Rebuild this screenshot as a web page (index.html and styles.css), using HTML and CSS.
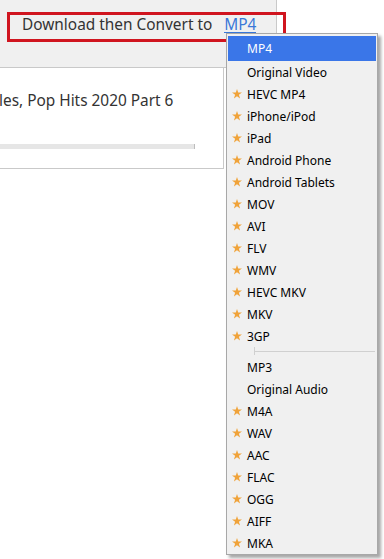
FILE: index.html
```html
<!DOCTYPE html>
<html>
<head>
<meta charset="utf-8">
<link rel="stylesheet" href="styles.css">
</head>
<body>
<div class="page">
  <div class="toolbar">
    <div class="convert">
      <span class="convert-label">Download then Convert to</span>
      <a class="convert-link" href="#">MP4</a>
    </div>
  </div>
  <div class="item-card">
    <div class="item-title">les, Pop Hits 2020 Part 6</div>
    <div class="progress"></div>
  </div>
  <div class="annotation"></div>
  <ul class="menu">
    <li class="menu-item active">MP4</li>
    <li class="menu-item">Original Video</li>
    <li class="menu-item star">HEVC MP4</li>
    <li class="menu-item star">iPhone/iPod</li>
    <li class="menu-item star">iPad</li>
    <li class="menu-item star">Android Phone</li>
    <li class="menu-item star">Android Tablets</li>
    <li class="menu-item star">MOV</li>
    <li class="menu-item star">AVI</li>
    <li class="menu-item star">FLV</li>
    <li class="menu-item star">WMV</li>
    <li class="menu-item star">HEVC MKV</li>
    <li class="menu-item star">MKV</li>
    <li class="menu-item star">3GP</li>
    <li class="menu-sep"></li>
    <li class="menu-item">MP3</li>
    <li class="menu-item">Original Audio</li>
    <li class="menu-item star">M4A</li>
    <li class="menu-item star">WAV</li>
    <li class="menu-item star">AAC</li>
    <li class="menu-item star">FLAC</li>
    <li class="menu-item star">OGG</li>
    <li class="menu-item star">AIFF</li>
    <li class="menu-item star">MKA</li>
  </ul>
</div>
</body>
</html>
```
FILE: styles.css
```css
html, body {
  margin: 0;
  padding: 0;
  background: #ffffff;
}
body {
  width: 384px;
  height: 559px;
  overflow: hidden;
  font-family: "Noto Sans", "Open Sans", sans-serif;
}
.page {
  position: relative;
  width: 384px;
  height: 559px;
}
.toolbar {
  width: 277px;
  height: 68px;
  background: #f0f0f0;
  border-right: 1px solid #c9c9c9;
  border-bottom: 1px solid #c9c9c9;
  box-sizing: border-box;
  padding: 12px 0 0 22px;
}
.convert {
  display: flex;
  align-items: baseline;
  gap: 12px;
  font-size: 15.4px;
  line-height: 25px;
  color: #333333;
  white-space: nowrap;
}
.convert-link {
  color: #3a78d8;
  text-decoration: none;
  line-height: 15px;
  border-bottom: 1px solid #3a78d8;
}
.item-card {
  width: 224px;
  height: 101px;
  border-right: 1px solid #c9c9c9;
  border-bottom: 1px solid #c9c9c9;
  box-sizing: border-box;
  padding-top: 21px;
}
.item-title {
  font-size: 15.4px;
  line-height: 24px;
  color: #333333;
  white-space: nowrap;
  margin-left: -1px;
}
.progress {
  margin-top: 31px;
  width: 195px;
  height: 5px;
  background: #e6e6e6;
  border-right: 1px solid #bdbdbd;
  box-sizing: border-box;
}
.annotation {
  position: absolute;
  left: 7px;
  top: 12px;
  width: 279px;
  height: 30px;
  border: 3px solid #d0151f;
  box-sizing: border-box;
}
.menu {
  position: absolute;
  left: 226px;
  top: 33px;
  width: 152px;
  margin: 0;
  padding: 2px 1px 0 1px;
  list-style: none;
  background: #f0f0f0;
  border: 1px solid #a8a8a8;
  box-shadow: 3px 3px 3px rgba(0, 0, 0, 0.35);
  box-sizing: border-box;
  font-size: 12px;
  color: #000000;
}
.menu-item {
  position: relative;
  height: 22px;
  line-height: 22px;
  padding-left: 19px;
  padding-top: 1px;
  box-sizing: border-box;
  white-space: nowrap;
}
.menu-item.active {
  height: 25px;
  line-height: 24px;
  background: #3a76e8;
  color: #ffffff;
}
.menu-item.star::before {
  content: "";
  position: absolute;
  left: 4px;
  top: 6px;
  width: 10px;
  height: 10px;
  background: #f0a33a;
  clip-path: polygon(50% 0%, 62% 36%, 100% 36%, 69% 58%, 81% 95%, 50% 72%, 19% 95%, 31% 58%, 0% 36%, 38% 36%);
}
.menu-sep {
  position: relative;
  height: 9px;
  margin-left: 26px;
  margin-right: 1px;
}
.menu-sep::before {
  content: "";
  position: absolute;
  left: 0;
  right: 0;
  top: 4px;
  border-top: 1px solid #d0d0d0;
}
.menu-sep::after {
  content: "";
  position: absolute;
  left: 0;
  top: 0;
  height: 8px;
  border-left: 1px solid #d0d0d0;
}
```
